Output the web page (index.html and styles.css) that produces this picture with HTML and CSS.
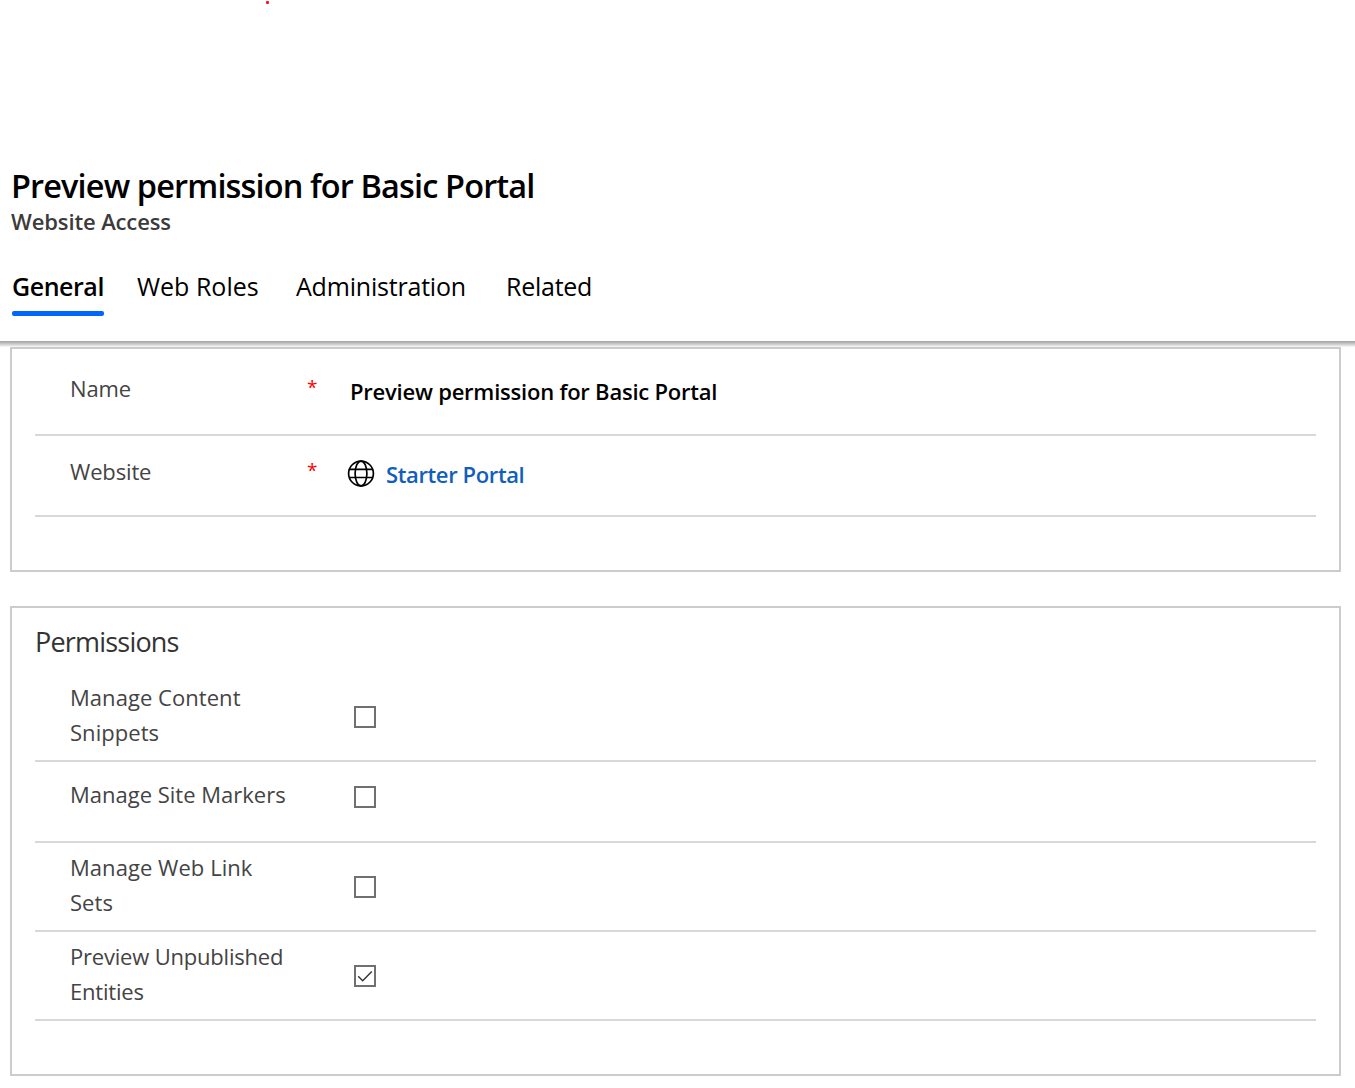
FILE: index.html
```html
<!DOCTYPE html>
<html lang="en">
<head>
<meta charset="utf-8">
<title>Website Access</title>
<link rel="stylesheet" href="styles.css">
</head>
<body>
<span class="marker"></span>
<header class="header">
  <h1 class="title">Preview permission for Basic Portal</h1>
  <p class="entity">Website Access</p>
  <nav class="tabs">
    <a class="tab tab-active">General</a>
    <a class="tab tab-roles">Web Roles</a>
    <a class="tab tab-admin">Administration</a>
    <a class="tab tab-related">Related</a>
  </nav>
</header>
<main class="content">
  <section class="card">
    <div class="row row-name">
      <div class="label">Name</div><div class="required">*</div>
      <div class="value value-name">Preview permission for Basic Portal</div>
    </div>
    <div class="row row-website">
      <div class="label">Website</div><div class="required">*</div>
      <div class="value lookup">
        <svg class="globe" viewBox="0 0 28 28" width="28" height="28" fill="none" stroke="#000" stroke-width="1.7"><circle cx="14" cy="14.5" r="12.4"/><ellipse cx="14" cy="14.5" rx="5.9" ry="12.4"/><path d="M2.3 10.4h23.4M2.3 18.5h23.4"/></svg>
        <a class="link">Starter Portal</a>
      </div>
    </div>
  </section>
  <section class="card">
    <h2 class="card-title">Permissions</h2>
    <div class="row"><div class="label label-content">Manage Content<br>Snippets</div><span class="checkbox"></span></div>
    <div class="row row-single"><div class="label label-markers">Manage Site Markers</div><span class="checkbox"></span></div>
    <div class="row"><div class="label label-links">Manage Web Link<br>Sets</div><span class="checkbox"></span></div>
    <div class="row"><div class="label label-preview">Preview Unpublished<br>Entities</div><span class="checkbox"><svg viewBox="0 0 18 18" width="18" height="18" fill="none" stroke="#333" stroke-width="1.4"><path d="M2.2 9.2l4.5 4.5L15.8 4.4"/></svg></span></div>
  </section>
</main>
</body>
</html>
```
FILE: styles.css
```css
* { box-sizing: border-box; }
body {
  margin: 0;
  height: 1088px;
  overflow: hidden;
  background: #fff;
  color: #000;
  font-family: "Open Sans", "Noto Sans", sans-serif;
}
h1, h2, p { margin: 0; }

.marker {
  position: absolute;
  left: 266px;
  top: 1px;
  width: 3px;
  height: 3px;
  border-radius: 1px;
  background: #ff1020;
}

.header {
  height: 347px;
  padding: 164px 11px 0;
  background: linear-gradient(#aaa 0, #aaa 1px, #b4b4b4 1px, #b4b4b4 2px, #c4c4c4 2px, #c4c4c4 3px, #d2d2d2 3px, #d2d2d2 4px, #e2e2e2 4px, #e2e2e2 5px, #f2f2f2 5px) 0 341px / 100% 6px no-repeat;
}
.title { font-size: 32.5px; line-height: 44px; font-weight: 600; letter-spacing: -0.87px; }
.entity { margin-top: -2px; font-size: 22px; line-height: 30px; font-weight: 600; letter-spacing: -0.12px; color: #3b3b3b; }

.tabs { display: flex; margin-top: 33px; padding-left: 1px; }
.tab { font-size: 25px; line-height: 34px; white-space: nowrap; }
.tab-active {
  position: relative;
  width: 92px;
  height: 47px;
  font-weight: 600;
  letter-spacing: -0.45px;
}
.tab-active::after {
  content: "";
  position: absolute;
  left: 0;
  right: 0;
  bottom: 0;
  height: 5px;
  border-radius: 2px;
  background: #0066ff;
}
.tab-roles { margin-left: 33px; width: 159px; }
.tab-admin { width: 210px; letter-spacing: -0.2px; }
.tab-related { letter-spacing: -0.25px; }

.content { padding: 0 14px 0 10px; }
.card { border: 2px solid #ccc; padding: 0 23px 53px; }
.card + .card { margin-top: 34px; }
.card-title { height: 65px; padding-top: 17px; font-size: 27px; line-height: 34px; font-weight: 400; letter-spacing: -0.8px; color: #333; }

.row {
  display: flex;
  height: 89px;
  padding: 7px 0 0 35px;
  border-bottom: 2px solid #d8d8d8;
  font-size: 22px;
  line-height: 35px;
}
.row-name { height: 87px; padding-top: 22px; }
.row-website { height: 81px; padding-top: 18px; }
.row-single { height: 81px; padding-top: 15px; }
.label { width: 238px; color: #444; letter-spacing: -0.15px; white-space: nowrap; }
.label-content, .label-links { letter-spacing: 0.05px; }
.label-markers { letter-spacing: 0; }
.label-preview { letter-spacing: -0.2px; }
.required { width: 42px; margin: -1px 0 0 -1px; font-size: 19px; color: #f00; }
.value { padding-top: 3px; font-weight: 600; }
.value-name { padding-left: 1px; letter-spacing: -0.22px; }
.lookup { display: flex; gap: 11px; }
.globe { margin: 2px 0 0 -2px; }
.link { color: #115ebc; letter-spacing: -0.38px; }
.checkbox {
  width: 22px;
  height: 22px;
  margin: 26px 0 0 46px;
  border: 2px solid #707070;
}
.checkbox svg { display: block; }
.row-single .checkbox { margin-top: 9px; }
```
